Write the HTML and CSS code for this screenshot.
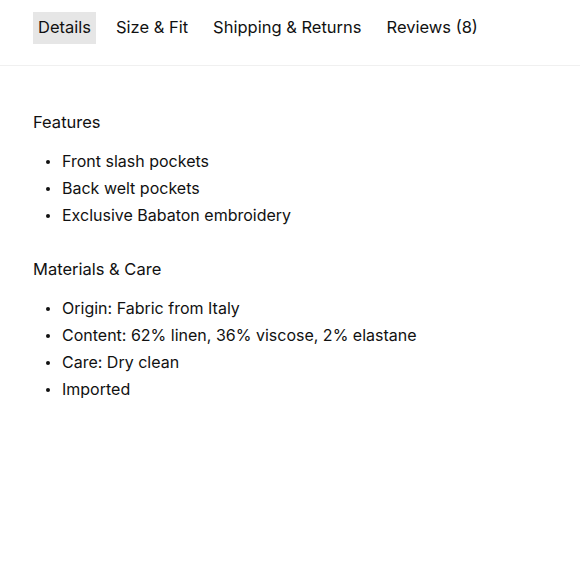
FILE: index.html
```html
<!DOCTYPE html>
<html lang="en">
<head>
<meta charset="utf-8">
<title>Details</title>
<link rel="stylesheet" href="styles.css">
</head>
<body>
<nav class="tabs">
  <a class="tab active">Details</a>
  <a class="tab">Size &amp; Fit</a>
  <a class="tab">Shipping &amp; Returns</a>
  <a class="tab">Reviews (8)</a>
</nav>
<main class="panel">
  <h3 class="heading">Features</h3>
  <ul class="list">
    <li>Front slash pockets</li>
    <li>Back welt pockets</li>
    <li>Exclusive Babaton embroidery</li>
  </ul>
  <h3 class="heading">Materials &amp; Care</h3>
  <ul class="list">
    <li>Origin: Fabric from Italy</li>
    <li>Content: 62% linen, 36% viscose, 2% elastane</li>
    <li>Care: Dry clean</li>
    <li>Imported</li>
  </ul>
</main>
</body>
</html>
```
FILE: styles.css
```css
html, body {
  margin: 0;
  padding: 0;
  background: #fff;
}
body {
  font-family: "Inter", "Liberation Sans", sans-serif;
  font-size: 16px;
  color: #111;
}
.tabs {
  display: flex;
  gap: 15px;
  padding: 12px 33px 21px;
  border-bottom: 1px solid #f0f0f0;
}
.tab {
  display: block;
  padding: 5px 5px 7px;
  line-height: 20px;
  font-size: 16.5px;
  color: #111;
}
.tab.active {
  background: #e6e6e6;
}
.panel {
  padding: 44px 33px 0;
}
.heading {
  margin: 0 0 14px;
  font-size: 16.5px;
  font-weight: 400;
  line-height: 24px;
}
.list {
  list-style: none;
  margin: 0 0 28px;
  padding: 0;
}
.list li {
  display: flex;
  align-items: center;
  line-height: 27px;
}
.list li::before {
  content: "";
  width: 4px;
  height: 4px;
  border-radius: 50%;
  background: #111;
  margin: 0 12px 0 13px;
  flex: none;
}
```
